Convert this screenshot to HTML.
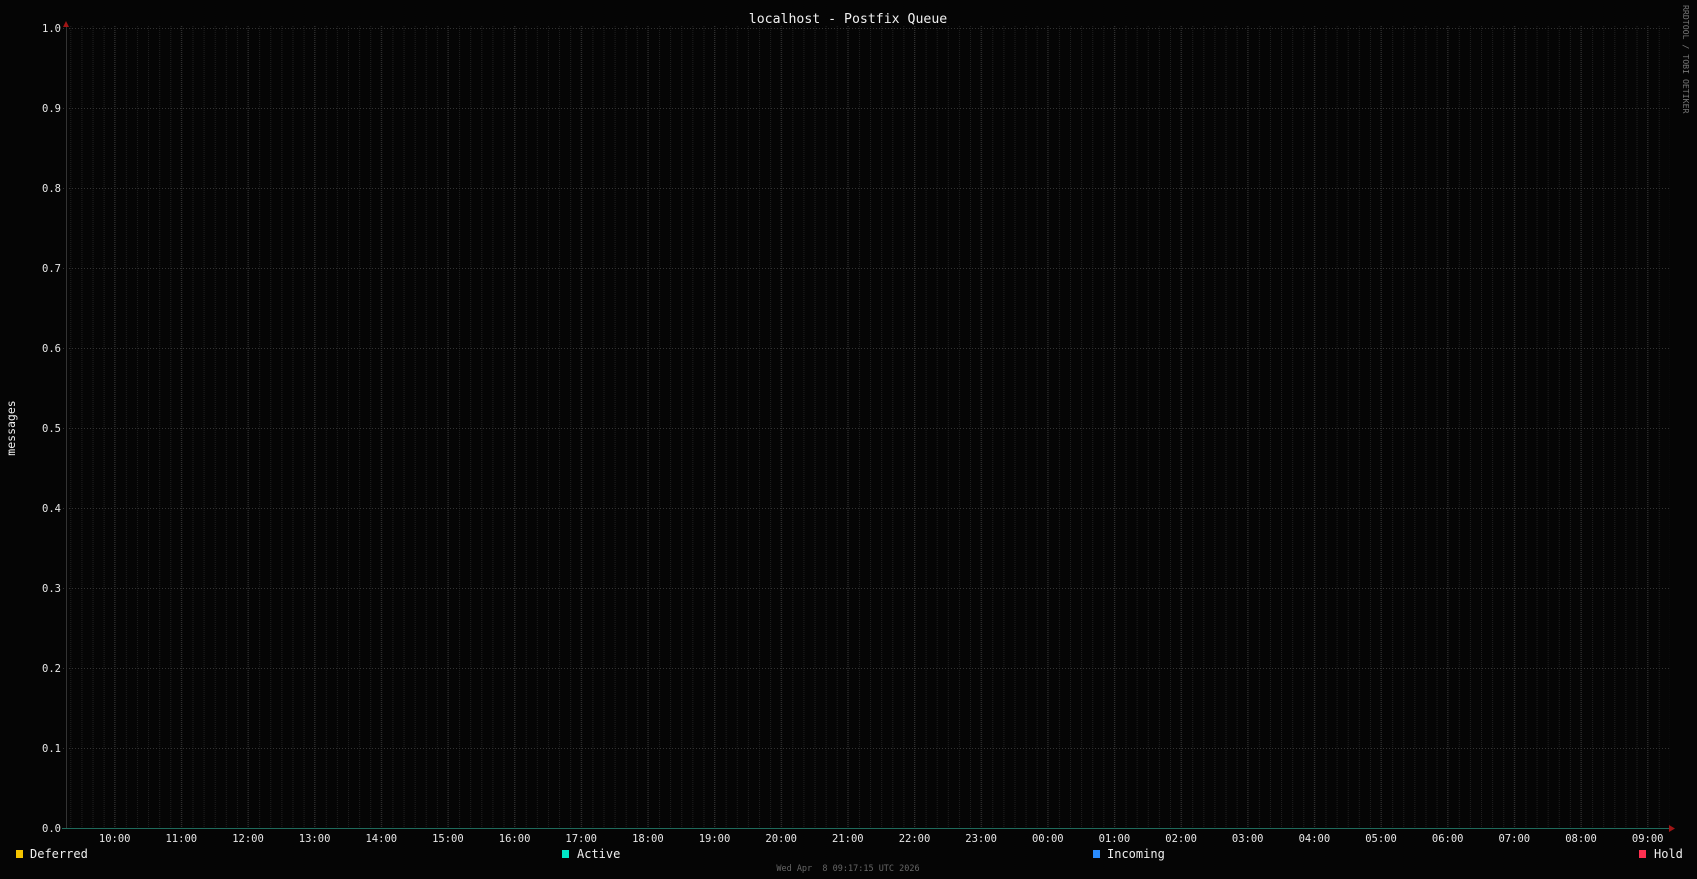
<!DOCTYPE html>
<html><head><meta charset="utf-8"><style>
html,body{margin:0;padding:0;background:#050505;width:1697px;height:879px;overflow:hidden}
svg{display:block}
text{font-family:"DejaVu Sans Mono","Liberation Mono",monospace}
</style></head><body>
<svg width="1697" height="879" viewBox="0 0 1697 879" xmlns="http://www.w3.org/2000/svg">
<defs>
<pattern id="minor" x="70.3" y="0" width="11.108" height="4" patternUnits="userSpaceOnUse">
<rect x="0" y="0" width="1" height="1" fill="#1f1f1f"/>
<rect x="0" y="2" width="1" height="1" fill="#1f1f1f"/>
</pattern>
<pattern id="major" x="114.2" y="0" width="66.65" height="4" patternUnits="userSpaceOnUse">
<rect x="0" y="0" width="1" height="1" fill="#303030"/>
<rect x="0" y="2" width="1" height="1" fill="#303030"/>
</pattern>
<pattern id="hor" x="0" y="0" width="3" height="80" patternUnits="userSpaceOnUse">
<rect x="0" y="28" width="1" height="1" fill="#333"/>
</pattern>
</defs>
<rect width="1697" height="879" fill="#050505"/>
<rect x="67" y="25" width="1603" height="803" fill="url(#minor)"/>
<rect x="67" y="25" width="1603" height="803" fill="url(#major)"/>
<rect x="62" y="27" width="1608" height="722" fill="url(#hor)"/>
<rect x="62" y="747" width="1608" height="2" fill="url(#hor)"/>
<line x1="66.5" y1="24" x2="66.5" y2="829" stroke="#333"/>
<line x1="62" y1="828.5" x2="1670" y2="828.5" stroke="#1f6b5c"/>
<polygon points="63,27 69,27 66,21" fill="#a01515"/>
<polygon points="1669,825 1669,832 1675,828.5" fill="#a01515"/>
<g fill="#e8e8e8" font-size="10.5" text-anchor="end">
<text x="61" y="32">1.0</text><text x="61" y="112">0.9</text><text x="61" y="192">0.8</text>
<text x="61" y="272">0.7</text><text x="61" y="352">0.6</text><text x="61" y="432">0.5</text>
<text x="61" y="512">0.4</text><text x="61" y="592">0.3</text><text x="61" y="672">0.2</text>
<text x="61" y="752">0.1</text><text x="61" y="832">0.0</text>
</g>
<g fill="#e8e8e8" font-size="10.5" text-anchor="middle">
<text x="114.7" y="842">10:00</text><text x="181.3" y="842">11:00</text><text x="248" y="842">12:00</text>
<text x="314.6" y="842">13:00</text><text x="381.3" y="842">14:00</text><text x="447.9" y="842">15:00</text>
<text x="514.6" y="842">16:00</text><text x="581.2" y="842">17:00</text><text x="647.9" y="842">18:00</text>
<text x="714.5" y="842">19:00</text><text x="781.2" y="842">20:00</text><text x="847.8" y="842">21:00</text>
<text x="914.5" y="842">22:00</text><text x="981.1" y="842">23:00</text><text x="1047.8" y="842">00:00</text>
<text x="1114.4" y="842">01:00</text><text x="1181.1" y="842">02:00</text><text x="1247.7" y="842">03:00</text>
<text x="1314.4" y="842">04:00</text><text x="1381" y="842">05:00</text><text x="1447.7" y="842">06:00</text>
<text x="1514.3" y="842">07:00</text><text x="1581" y="842">08:00</text><text x="1647.7" y="842">09:00</text>
</g>
<text x="848" y="23" fill="#f0f0f0" font-size="13.2" text-anchor="middle">localhost - Postfix Queue</text>
<text transform="translate(15,428) rotate(-90)" fill="#f0f0f0" font-size="11.5" text-anchor="middle">messages</text>
<text transform="translate(1683,5) rotate(90)" fill="#777" font-size="8.2" text-anchor="start">RRDTOOL / TOBI OETIKER</text>
<rect x="16" y="850" width="7" height="8" fill="#f5c400"/>
<text x="30" y="858" fill="#f0f0f0" font-size="12">Deferred</text>
<rect x="562" y="850" width="7" height="8" fill="#00e8c8"/>
<text x="577" y="858" fill="#f0f0f0" font-size="12">Active</text>
<rect x="1093" y="850" width="7" height="8" fill="#2a8cff"/>
<text x="1107" y="858" fill="#f0f0f0" font-size="12">Incoming</text>
<rect x="1639" y="850" width="7" height="8" fill="#ff3050"/>
<text x="1654" y="858" fill="#f0f0f0" font-size="12">Hold</text>
<text x="848" y="871" fill="#666" font-size="8.5" text-anchor="middle" xml:space="preserve">Wed Apr  8 09:17:15 UTC 2026</text>
</svg>
</body></html>
